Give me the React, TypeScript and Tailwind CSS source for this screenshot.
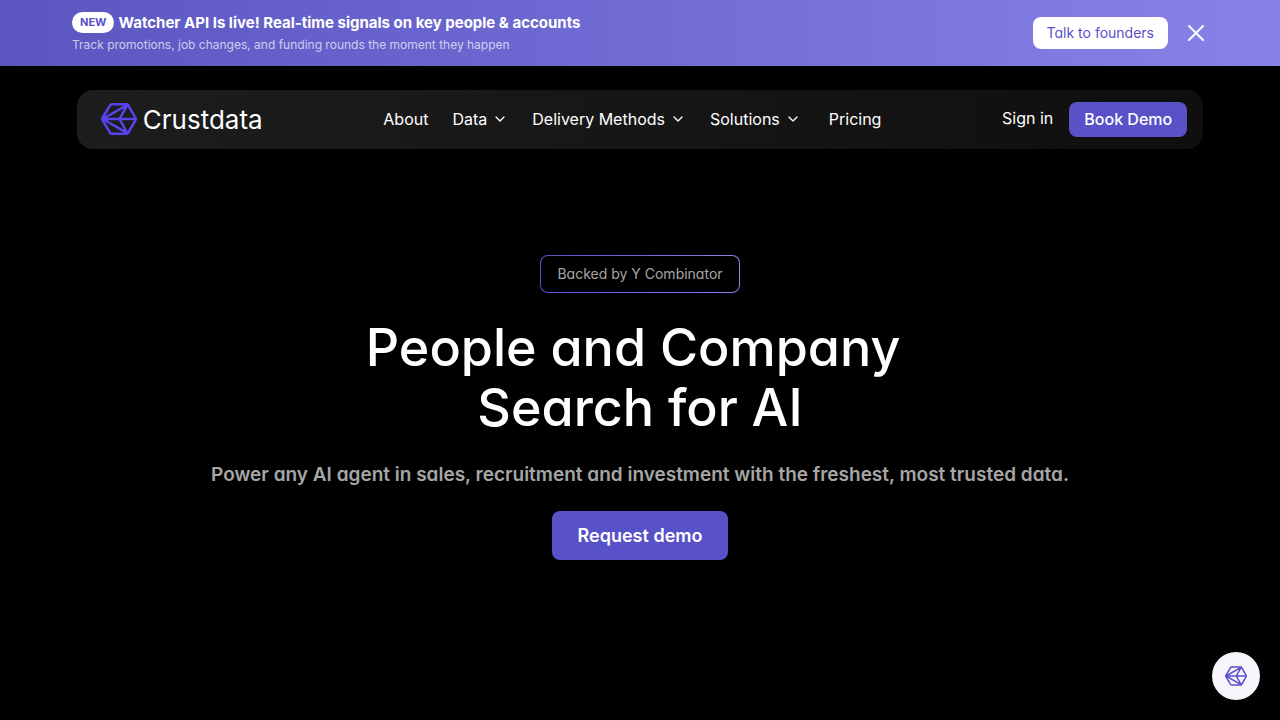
import { useState } from 'react';
import { ChevronDown } from 'lucide-react';

const navLinks = [
  { label: 'About', menu: false },
  { label: 'Data', menu: true },
  { label: 'Delivery Methods', menu: true },
  { label: 'Solutions', menu: true },
];

function LogoMark({ className }: { className?: string }) {
  return (
    <svg
      viewBox="0 0 36 32"
      className={className}
      fill="none"
      stroke="currentColor"
      strokeWidth="2.5"
      strokeLinejoin="round"
      strokeLinecap="round"
      aria-hidden="true"
    >
      <path d="M11 1.3h14.5q1.200 0 1.800 1l7 12.200q.8 1.500 0 3l-7 12.200q-.6 1-1.800 1H11q-1.200 0-1.900-1L1.700 17.500q-.9-1.500 0-3L9.100 2.300q.7-1 1.900-1z" />
      <path d="M1.600 16h33M1.600 16 26.400 1.800M1.600 16l24.800 14.200M26.400 1.800 18.500 16l7.900 14.200" />
    </svg>
  );
}

function Banner({ onClose }: { onClose: () => void }) {
  return (
    <div className="flex items-center justify-between bg-linear-to-r from-[#5b55c0] to-[#8882e8] px-[72px] py-3">
      <div>
        <div className="flex items-center gap-1">
          <span className="rounded-full bg-white px-2 text-[11px] leading-[21px] font-bold text-[#5851c8]">NEW</span>
          <p className="text-[15px] leading-[21px] font-bold text-white">
            Watcher API Is live! Real-time signals on key people &amp; accounts
          </p>
        </div>
        <p className="mt-[3px] text-xs leading-[18px] text-white/70">
          Track promotions, job changes, and funding rounds the moment they happen
        </p>
      </div>
      <div className="flex items-center gap-4">
        <a
          href="#founders"
          className="rounded-lg bg-white px-[14px] text-sm leading-8 text-[#5851c8] [font-feature-settings:'cv11']"
        >
          Talk to founders
        </a>
        <button type="button" aria-label="Close" onClick={onClose} className="p-1 text-white">
          <svg viewBox="0 0 16 16" className="size-4" stroke="currentColor" strokeWidth="2" strokeLinecap="round">
            <path d="M1 1l14 14M15 1 1 15" />
          </svg>
        </button>
      </div>
    </div>
  );
}

function Navbar() {
  return (
    <header className="mx-auto mt-6 flex w-[88%] items-center justify-between rounded-2xl bg-linear-to-r from-[#1d1d1d] to-[#0f0f0f] py-3 pr-4 pl-6">
      <a href="#home" className="flex items-center gap-[6px] text-white">
        <LogoMark className="mb-0.5 h-8 w-9 text-[#5744ee]" />
        <span className="text-[26px] leading-[35px] font-normal">Crustdata</span>
      </a>
      <nav className="flex items-center gap-6 pb-0.5 text-base leading-6 text-white">
        {navLinks.map((link) =>
          link.menu ? (
            <button key={link.label} type="button" className="flex items-center gap-[5px]">
              {link.label}
              <ChevronDown className="size-4" />
            </button>
          ) : (
            <a key={link.label} href="#about">
              {link.label}
            </a>
          )
        )}
        <a href="#pricing" className="pl-1">
          Pricing
        </a>
      </nav>
      <div className="flex items-center gap-4 text-base text-white">
        <a href="#signin" className="pb-1">
          Sign in
        </a>
        <a
          href="#demo"
          className="rounded-lg bg-[#5851c8] px-[15px] leading-[35px] font-medium"
        >
          Book Demo
        </a>
      </div>
    </header>
  );
}

function Hero() {
  return (
    <main className="flex flex-col items-center px-4 pt-[106px] text-center">
      <div className="rounded-lg bg-linear-to-r from-[#5851c8] to-[#8a84eb] p-px">
        <p className="rounded-[7px] bg-black px-4 text-sm leading-9 text-[#a6a6a6] [font-feature-settings:'cv11']">
          Backed by Y Combinator
        </p>
      </div>
      <h1 className="mt-[25px] text-[52px] leading-[60px] font-medium text-white [font-feature-settings:'cv11']">
        People and Company&nbsp;
        <br />
        Search for AI
      </h1>
      <p className="mt-[23px] text-[19px] leading-7 font-semibold text-[#a6a6a6] [font-feature-settings:'cv11']">
        Power any AI agent in sales, recruitment and investment with the freshest, most trusted data.
      </p>
      <a
        href="#request"
        className="mt-[22px] rounded-lg bg-[#5851c8] px-[26px] text-lg leading-[49px] font-semibold text-white"
      >
        Request demo
      </a>
    </main>
  );
}

export default function App() {
  const [showBanner, setShowBanner] = useState(true);

  return (
    <div className="min-h-screen bg-black font-['Inter',sans-serif]">
      {showBanner && <Banner onClose={() => setShowBanner(false)} />}
      <Navbar />
      <Hero />
      <button
        type="button"
        aria-label="Open chat"
        className="fixed right-5 bottom-5 flex size-12 items-center justify-center rounded-full bg-[#f9f5fd] text-[#5851c8]"
      >
        <LogoMark className="h-5 w-[22px]" />
      </button>
    </div>
  );
}
